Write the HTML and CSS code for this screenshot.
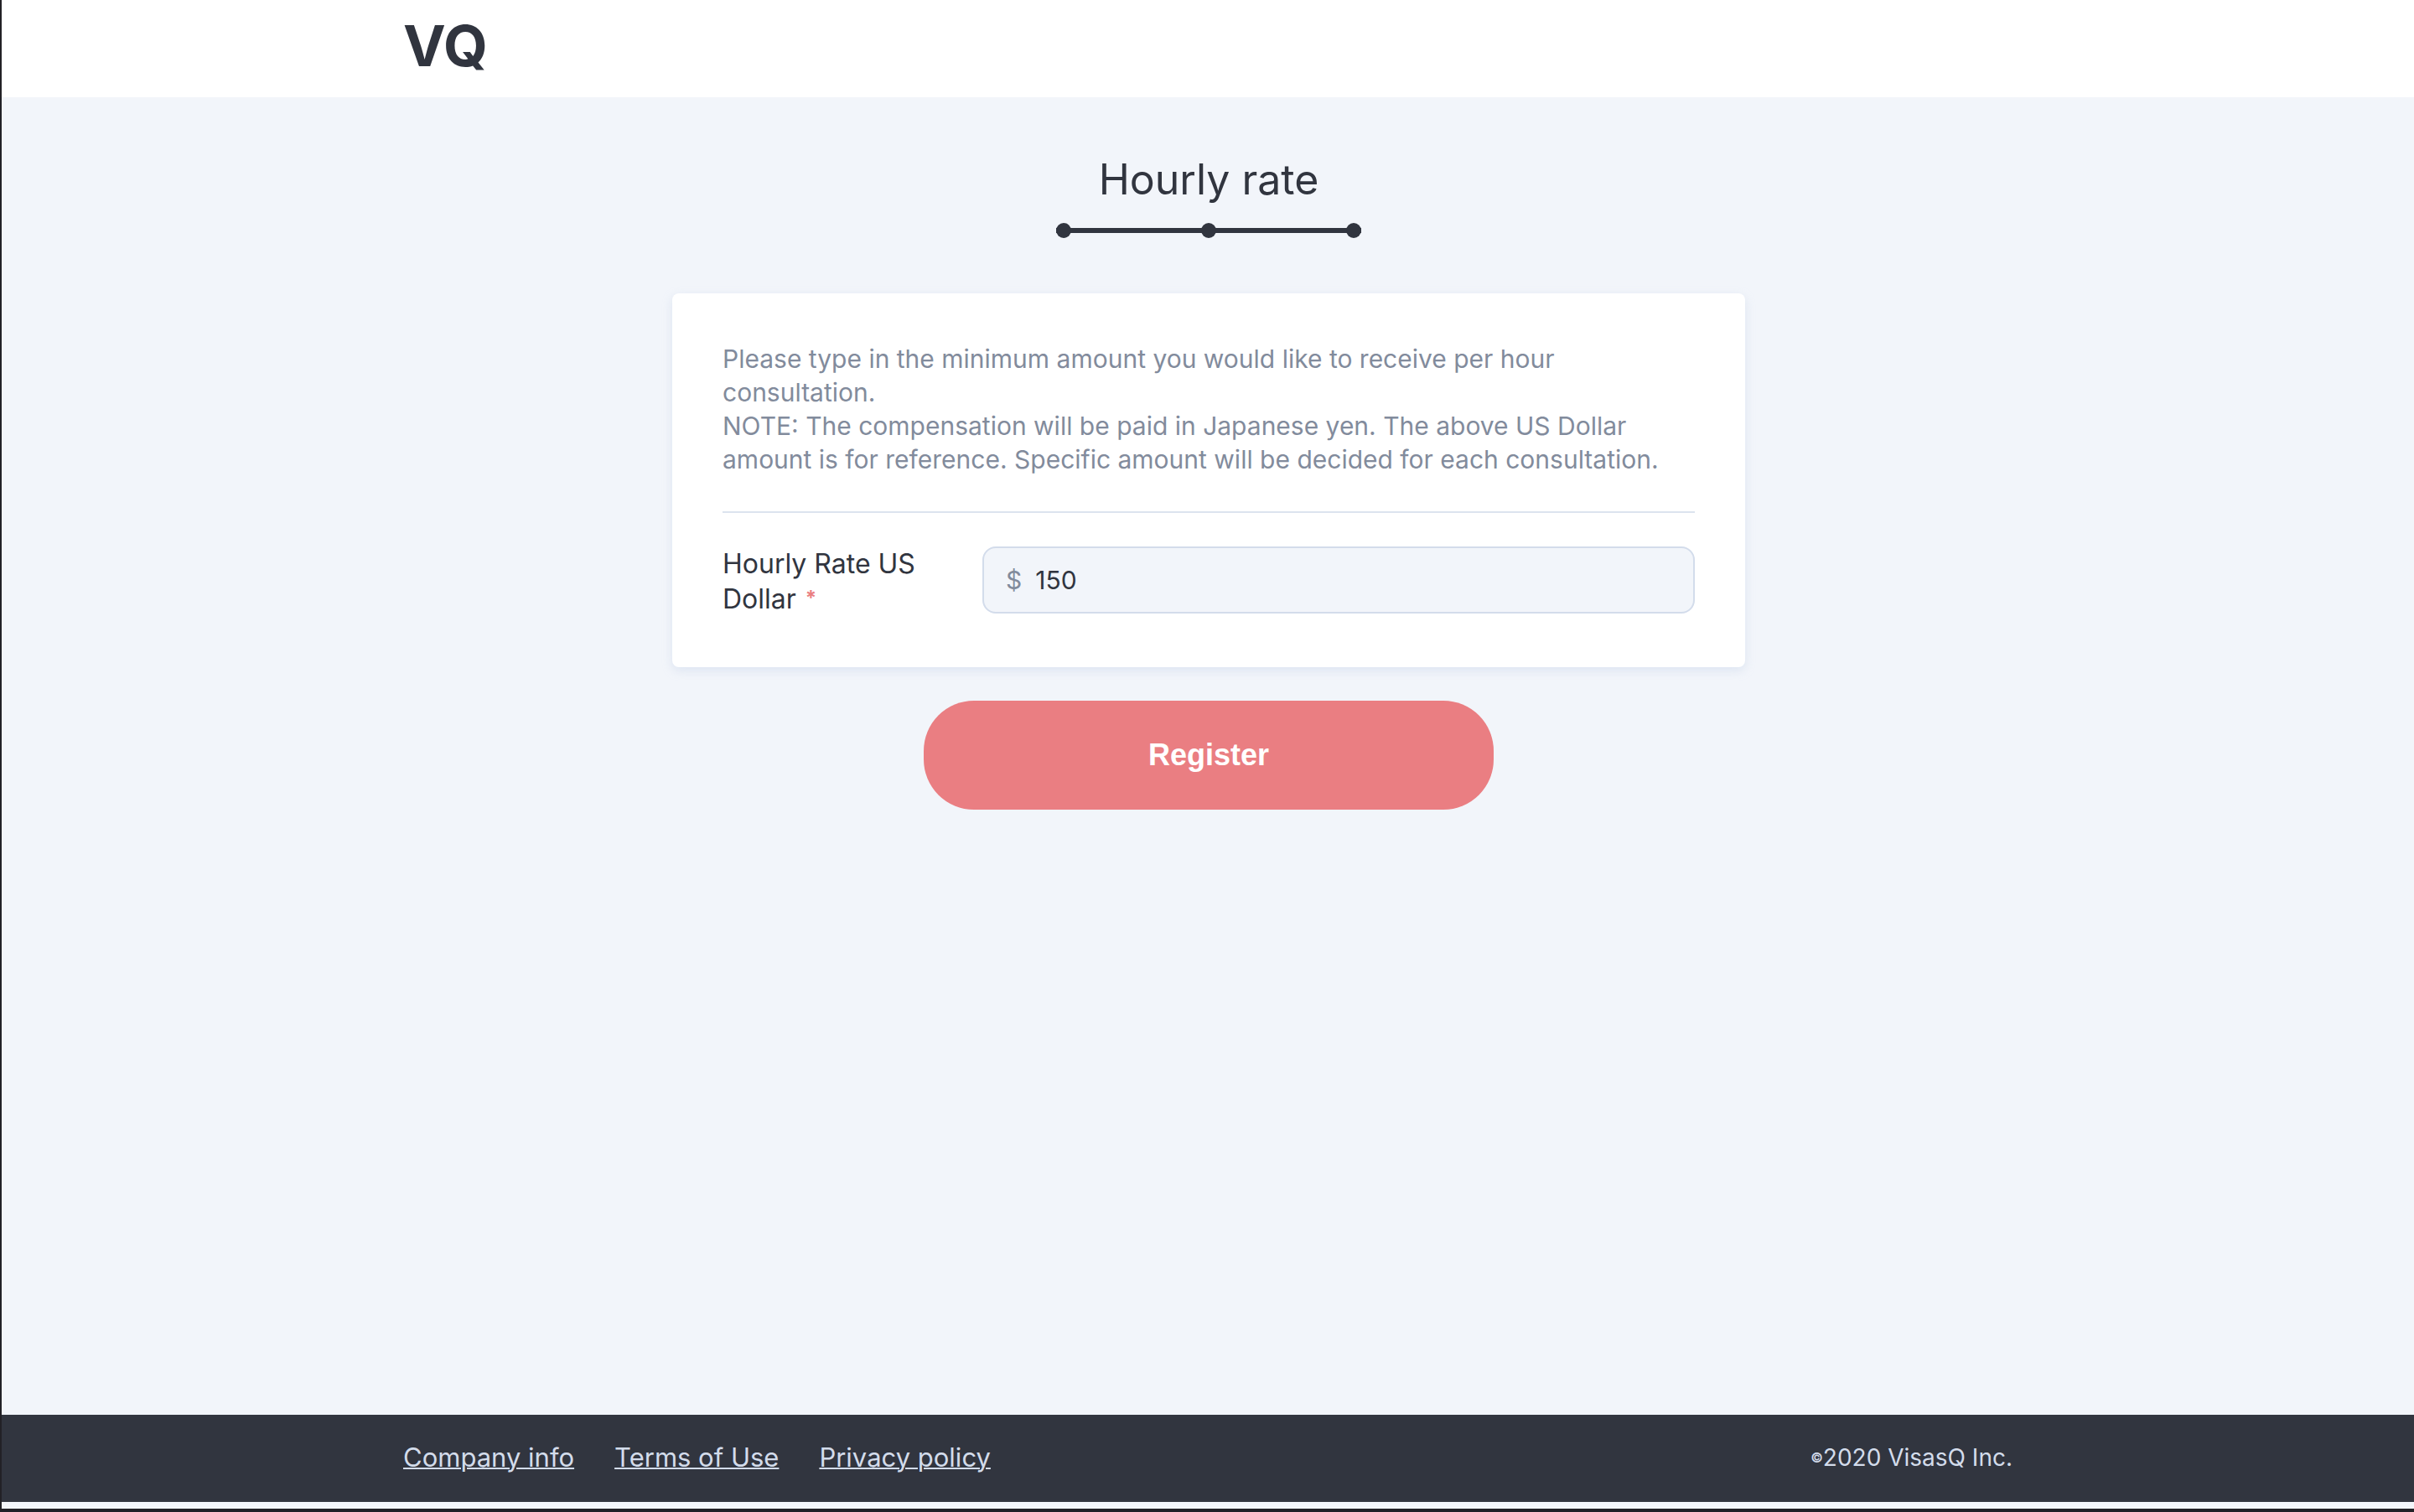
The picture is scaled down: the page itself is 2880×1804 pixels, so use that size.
FILE: index.html
```html
<!DOCTYPE html>
<html lang="en">
<head>
<meta charset="utf-8">
<title>Hourly rate | VisasQ</title>
<link rel="stylesheet" href="styles.css">
</head>
<body>
<div class="page">
  <header class="header">
    <div class="container"><a class="logo" href="#">VQ</a></div>
  </header>
  <main class="main">
    <h1 class="title">Hourly rate</h1>
    <div class="steps"><span class="dot"></span><span class="dot"></span><span class="dot"></span></div>
    <form class="form">
      <section class="card">
        <p class="note">Please type in the minimum amount you would like to receive per hour consultation.<br>NOTE: The compensation will be paid in Japanese yen. The above US Dollar amount is for reference. Specific amount will be decided for each consultation.</p>
        <div class="row">
          <label class="label" for="rate">Hourly Rate US Dollar <span class="required">*</span></label>
          <div class="field"><span class="currency">$</span><input class="input" id="rate" type="text" value="150"></div>
        </div>
      </section>
      <button class="submit" type="button">Register</button>
    </form>
  </main>
  <footer class="footer">
    <div class="container footer-inner">
      <nav class="links">
        <a class="link" href="#">Company info</a>
        <a class="link" href="#">Terms of Use</a>
        <a class="link" href="#">Privacy policy</a>
      </nav>
      <small class="copyright"><span class="mark">©</span>2020 VisasQ Inc.</small>
    </div>
  </footer>
</div>
</body>
</html>
```
FILE: styles.css
```css
* { box-sizing: border-box; }
body {
  margin: 0;
  background: #f2f5fa;
  color: #31353f;
  font-family: Inter, "Liberation Sans", sans-serif;
  font-size: 30px;
  line-height: 40px;
}
.page {
  display: flex;
  flex-direction: column;
  min-height: 100vh;
  padding-bottom: 8px;
  border-left: 2px solid #222126;
  border-bottom: 4px solid #222126;
}
.container { width: 100%; max-width: 1920px; margin: 0 auto; }
.header { height: 116px; background: #fff; padding-top: 18px; }
.logo {
  display: inline-block;
  color: #31353f;
  font-size: 68px;
  font-weight: 700;
  line-height: 72px;
  text-decoration: none;
}
.main {
  flex: 1;
  display: flex;
  flex-direction: column;
  align-items: center;
  padding: 68px 0 0 2px;
}
.title { margin: 0; font-size: 50px; font-weight: 400; line-height: 60px; }
.steps {
  display: flex;
  justify-content: space-between;
  width: 364px;
  margin: 22px 0 66px;
  background: linear-gradient(#31353f, #31353f) center / 100% 6px no-repeat;
}
.dot { width: 18px; height: 18px; border-radius: 50%; background: #31353f; }
.form {
  display: flex;
  flex-direction: column;
  align-items: center;
  width: 100%;
  max-width: 1280px;
}
.card {
  width: 100%;
  padding: 58px 60px 60px;
  border-radius: 8px;
  background: #fff;
  box-shadow: 0 4px 12px rgba(190, 205, 230, 0.4);
}
.note {
  margin: 0 0 40px;
  padding-bottom: 42px;
  border-bottom: 2px solid #dce3ee;
  color: #828b9c;
}
.row { display: flex; align-items: flex-start; }
.label { flex: 0 0 310px; padding-right: 60px; font-size: 32px; line-height: 42px; }
.required {
  margin-left: 2px;
  color: #ea7e82;
  font-size: 24px;
  font-weight: 700;
  line-height: 24px;
  vertical-align: 4px;
}
.field {
  flex: 1;
  display: flex;
  align-items: center;
  gap: 16px;
  height: 80px;
  padding: 0 26px;
  border: 2px solid #d3dceb;
  border-radius: 16px;
  background: #f2f5fa;
}
.currency { color: #828b9c; }
.input {
  flex: 1;
  min-width: 0;
  padding: 0;
  border: 0;
  outline: 0;
  background: transparent;
  color: #31353f;
  font: inherit;
}
.submit {
  width: 680px;
  max-width: 100%;
  height: 130px;
  margin: 40px 0;
  border: 0;
  border-radius: 60px;
  background: #ea7e82;
  color: #fff;
  font: 700 36px/44px "Liberation Sans", sans-serif;
}
.footer { background: #31353f; color: #d3dceb; padding: 31px 0 33px; }
.footer-inner { display: flex; justify-content: space-between; align-items: center; }
.links { display: flex; gap: 48px; font-size: 31px; }
.link { color: inherit; text-decoration: underline; text-decoration-thickness: 2px; }
.copyright { font-size: 28px; }
.mark { font-size: 16px; font-weight: 600; line-height: 16px; vertical-align: 4px; }
```
